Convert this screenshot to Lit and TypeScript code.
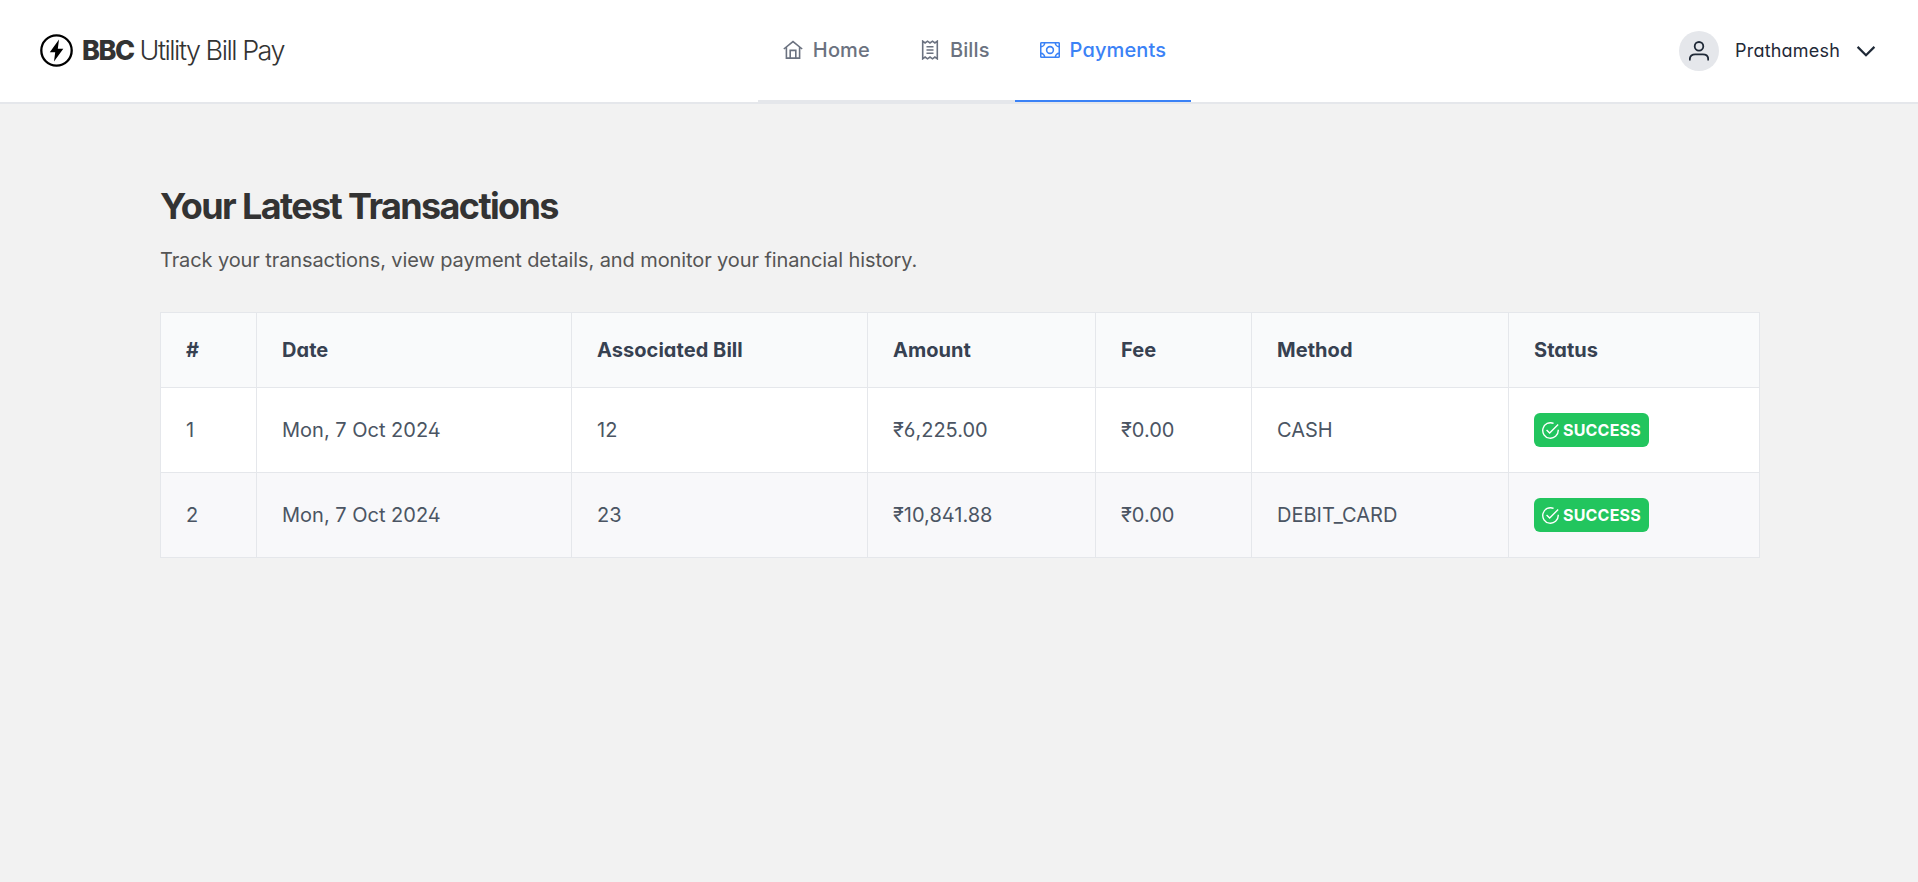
import { LitElement, html, css } from "lit";
import { customElement } from "lit/decorators.js";

const homeIcon = html`<svg class="icon" viewBox="0 0 20 20"><path d="M.8 9 10 1.6 19.2 9M3.4 7.2v10.9h13.2V7.2M7.2 18v-7.6h5.6V18" /></svg>`;
const receiptIcon = html`<svg class="icon" viewBox="0 0 20 20"><path d="M2.7 1.2 5.1 3l2.4-1.8L10 3l2.5-1.8L14.9 3l2.4-1.8v17.6L14.9 17l-2.4 1.8L10 17l-2.5 1.8L5.1 17l-2.4 1.8zM6.5 6.8h7M6.5 10h7M6.5 13.2h7" /></svg>`;
const moneyIcon = html`<svg class="icon" viewBox="0 0 20 20"><rect x=".7" y="2.8" width="18.6" height="14.4" rx=".8" /><circle cx="10" cy="10" r="3.4" /><path d="M.9 6.6a3.7 3.7 0 0 0 3.7-3.7M15.4 2.9a3.7 3.7 0 0 0 3.7 3.7M.9 13.4a3.7 3.7 0 0 1 3.7 3.7M15.4 17.1a3.7 3.7 0 0 1 3.7-3.7" /></svg>`;
const checkIcon = html`<svg class="check" viewBox="0 0 16 16"><path d="M15.3 7.3V8A7.3 7.3 0 1 1 10.9 1.3M15.2 2.3 7.2 10.3 4.3 7.5" /></svg>`;

const NAV = [
  { label: "Home", icon: homeIcon, active: false },
  { label: "Bills", icon: receiptIcon, active: false },
  { label: "Payments", icon: moneyIcon, active: true },
];
const COLUMNS = ["#", "Date", "Associated Bill", "Amount", "Fee", "Method", "Status"];
const ROWS = [
  ["1", "Mon, 7 Oct 2024", "12", "₹6,225.00", "₹0.00", "CASH"],
  ["2", "Mon, 7 Oct 2024", "23", "₹10,841.88", "₹0.00", "DEBIT_CARD"],
];

@customElement("app-root")
export class AppRoot extends LitElement {
  static styles = css`
    :host {
      display: block;
      min-height: 100vh;
      background: #f2f2f2;
      font-family: Inter, "Noto Sans", sans-serif;
      font-size: 20px;
      color: #333;
    }
    * { box-sizing: border-box; }
    svg { display: block; fill: none; stroke: currentColor; stroke-width: 1.6; flex: none; }
    header {
      display: grid;
      grid-template-columns: 1fr auto 1fr;
      height: 104px;
      padding: 0 42px 0 40px;
      background: #fff;
      border-bottom: 2px solid #e5e7eb;
    }
    .brand { display: flex; align-items: center; gap: 9px; padding-bottom: 1px; }
    .brand svg { width: 33px; height: 33px; color: #000; stroke-width: 2.3; }
    .brand .bolt { fill: #000; stroke: none; }
    .name { padding-bottom: 1px; font-size: 27px; font-weight: 300; letter-spacing: -1.5px; white-space: nowrap; }
    .name b { font-weight: 800; }
    nav { display: flex; margin-left: 33px; }
    .tab {
      display: flex;
      align-items: center;
      gap: 10px;
      padding: 0 25px;
      font-weight: 500;
      letter-spacing: 0.13px;
      color: #6b7280;
      border-bottom: 2px solid #e5e7eb;
      font-feature-settings: "cv02", "cv03", "cv04", "cv11";
    }
    .active { color: #3b82f6; border-color: #3b82f6; }
    .icon { width: 20px; height: 20px; }
    .user {
      display: flex;
      align-items: center;
      justify-content: flex-end;
      gap: 16px;
      color: #1f2937;
      font-size: 18px;
      letter-spacing: 0.2px;
      font-feature-settings: "cv02", "cv03", "cv04", "cv11";
    }
    .avatar { display: grid; place-items: center; width: 40px; height: 40px; border-radius: 50%; background: #e5e7eb; }
    .avatar svg { width: 20px; height: 20px; stroke-width: 1.8; }
    .login { padding-bottom: 1px; }
    .chevron { width: 20px; height: 20px; stroke-width: 2.2; }
    main { padding: 80px 158px 0 160px; }
    h1 { margin: 0; font-size: 36px; line-height: 44px; font-weight: 700; letter-spacing: -1.62px; }
    p { margin: 19px 0 39px; line-height: 26px; letter-spacing: -0.1px; color: #555; }
    table {
      width: 1600px;
      table-layout: fixed;
      border-collapse: collapse;
      font-feature-settings: "cv02", "cv03", "cv04", "cv11";
      color: #4b5563;
      background: #fff;
    }
    th, td { padding: 0 25px; text-align: left; border: 1px solid #e5e7eb; }
    th { height: 75px; background: #f9fafb; color: #374151; font-weight: 700; letter-spacing: 0.05px; }
    td { height: 85px; font-weight: 400; }
    tbody tr:nth-child(even) { background: #f8f8fa; }
    .c0 { width: 96px; } .c1 { width: 315px; } .c2 { width: 296px; } .c3 { width: 228px; }
    .c4 { width: 156px; } .c5 { width: 257px; }
    .badge {
      display: inline-flex;
      align-items: center;
      gap: 4px;
      height: 34px;
      padding: 0 8px;
      border-radius: 6px;
      background: #22c55e;
      color: #fff;
      font-size: 16px;
      font-weight: 700;
      letter-spacing: 0.2px;
      vertical-align: middle;
    }
    .check { width: 17px; height: 17px; stroke-width: 1.3; }
  `;

  render() {
    return html`
      <header>
        <div class="brand">
          <svg viewBox="0 0 33 33"><circle cx="16.5" cy="16.5" r="15.2" /><path class="bolt" d="M19 5.5 9.8 18.2h5.4L14 27.5l9.3-12.8h-5.5z" /></svg>
          <span class="name"><b>BBC</b> Utility Bill Pay</span>
        </div>
        <nav>${NAV.map((n) => html`<div class="tab ${n.active ? "active" : ""}">${n.icon}<span>${n.label}</span></div>`)}</nav>
        <div class="user">
          <span class="avatar"><svg viewBox="0 0 20 20"><circle cx="10" cy="5.3" r="4.3" /><path d="M.8 19.4v-1.2c0-3.3 2.4-4.9 5.4-4.9h7.6c3 0 5.4 1.6 5.4 4.9v1.2" /></svg></span>
          <span class="login">Prathamesh</span>
          <svg class="chevron" viewBox="0 0 20 20"><path d="m1.6 5.9 8.4 8.4 8.4-8.4" /></svg>
        </div>
      </header>
      <main>
        <h1>Your Latest Transactions</h1>
        <p>Track your transactions, view payment details, and monitor your financial history.</p>
        <table>
          <thead><tr>${COLUMNS.map((c, i) => html`<th class="c${i}">${c}</th>`)}</tr></thead>
          <tbody>
            ${ROWS.map((r) => html`<tr>${r.map((v) => html`<td>${v}</td>`)}<td><span class="badge">${checkIcon}<span>SUCCESS</span></span></td></tr>`)}
          </tbody>
        </table>
      </main>
    `;
  }
}
